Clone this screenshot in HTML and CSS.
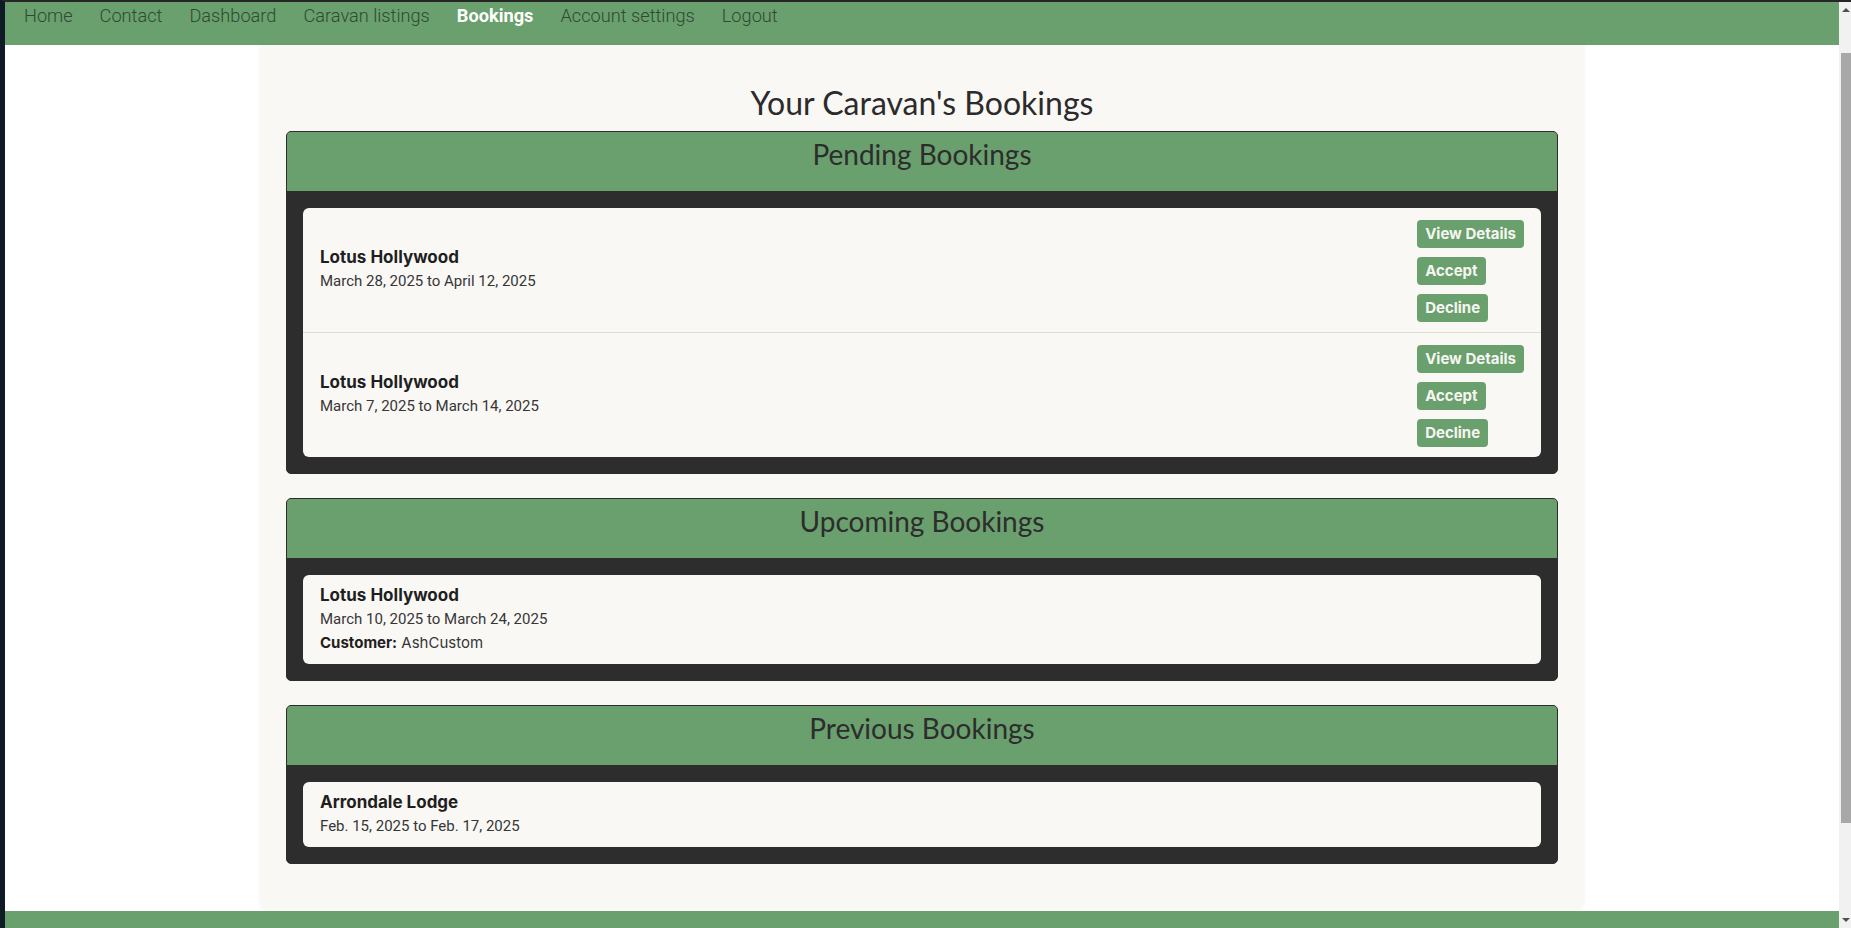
FILE: index.html
```html
<!DOCTYPE html>
<html lang="en">
<head>
<meta charset="utf-8">
<title>Your Caravan's Bookings</title>
<link rel="stylesheet" href="styles.css">
</head>
<body>
<div class="frame">
  <nav class="topnav">
    <a class="topnav-link" href="#">Home</a>
    <a class="topnav-link" href="#">Contact</a>
    <a class="topnav-link" href="#">Dashboard</a>
    <a class="topnav-link" href="#">Caravan listings</a>
    <a class="topnav-link is-active" href="#">Bookings</a>
    <a class="topnav-link" href="#">Account settings</a>
    <a class="topnav-link" href="#">Logout</a>
  </nav>

  <main class="page">
    <h1 class="page-title">Your Caravan's Bookings</h1>

    <section class="card">
      <h2 class="card-header">Pending Bookings</h2>
      <div class="card-body">
        <ul class="booking-list">
          <li class="booking booking-pending">
            <div class="booking-info">
              <p class="booking-name">Lotus Hollywood</p>
              <p class="booking-dates">March 28, 2025 to April 12, 2025</p>
            </div>
            <div class="booking-actions">
              <a class="btn" href="#">View Details</a>
              <button class="btn" type="button">Accept</button>
              <button class="btn" type="button">Decline</button>
            </div>
          </li>
          <li class="booking booking-pending">
            <div class="booking-info">
              <p class="booking-name">Lotus Hollywood</p>
              <p class="booking-dates">March 7, 2025 to March 14, 2025</p>
            </div>
            <div class="booking-actions">
              <a class="btn" href="#">View Details</a>
              <button class="btn" type="button">Accept</button>
              <button class="btn" type="button">Decline</button>
            </div>
          </li>
        </ul>
      </div>
    </section>

    <section class="card">
      <h2 class="card-header">Upcoming Bookings</h2>
      <div class="card-body">
        <ul class="booking-list">
          <li class="booking">
            <p class="booking-name">Lotus Hollywood</p>
            <p class="booking-dates">March 10, 2025 to March 24, 2025</p>
            <p class="booking-customer"><strong>Customer:</strong> AshCustom</p>
          </li>
        </ul>
      </div>
    </section>

    <section class="card">
      <h2 class="card-header">Previous Bookings</h2>
      <div class="card-body">
        <ul class="booking-list">
          <li class="booking">
            <p class="booking-name">Arrondale Lodge</p>
            <p class="booking-dates">Feb. 15, 2025 to Feb. 17, 2025</p>
          </li>
        </ul>
      </div>
    </section>
  </main>

  <footer class="footer"></footer>
</div>

<div class="scrollbar" aria-hidden="true">
  <span class="scrollbar-arrow scrollbar-arrow-up"></span>
  <span class="scrollbar-thumb"></span>
  <span class="scrollbar-arrow scrollbar-arrow-down"></span>
</div>
</body>
</html>
```

FILE: styles.css
```css
html, body {
  margin: 0;
  padding: 0;
  overflow: hidden;
}

body {
  height: 928px;
  box-sizing: border-box;
  border-top: 2px solid #262626;
  border-left: 5px solid #0f1a26;
  padding-right: 12px;
  background: #ffffff;
  font-family: "Inter", "Noto Sans", sans-serif;
  color: #2b2b2b;
}

.frame {
  height: 100%;
  display: flex;
  flex-direction: column;
}

/* ---------- top navigation ---------- */
.topnav {
  flex: 0 0 43px;
  box-sizing: border-box;
  display: flex;
  align-items: flex-start;
  gap: 27px;
  padding: 2px 0 0 19px;
  background: #6a9f6e;
}

.topnav-link {
  font-family: "Roboto", "Liberation Sans", sans-serif;
  font-weight: 300;
  font-size: 18.2px;
  line-height: 24px;
  color: #2f4a33;
  text-decoration: none;
}

.topnav-link.is-active {
  color: #ffffff;
  font-weight: 700;
}

/* ---------- page container ---------- */
.page {
  flex: 1 1 auto;
  width: 1324px;
  box-sizing: border-box;
  margin: 0 auto;
  padding: 0 26px;
  background: #f9f8f4;
  border-radius: 0 0 8px 8px;
  box-shadow: 0 0 4px rgba(0, 0, 0, 0.05);
}

.page-title {
  margin: 0 0 8px;
  padding-top: 38px;
  font-family: "Lato", sans-serif;
  font-weight: 400;
  font-size: 32px;
  line-height: 40px;
  text-align: center;
  color: #2b2b2b;
}

/* ---------- cards ---------- */
.card {
  margin-bottom: 24px;
  border: 1px solid #2d2d2d;
  border-radius: 5px;
  overflow: hidden;
  background: #2d2d2d;
}

.card-header {
  margin: 0;
  padding: 6px 0 20px;
  background: #6a9f6e;
  font-family: "Lato", sans-serif;
  font-weight: 400;
  font-size: 28px;
  line-height: 33px;
  text-align: center;
  color: #2d2d2d;
}

.card-body {
  padding: 17px 16px 16px;
}

.booking-list {
  list-style: none;
  margin: 0;
  padding: 0;
  background: #f9f8f5;
  border-radius: 6px;
  overflow: hidden;
}

.booking {
  padding: 8px 17px 9px;
  font-size: 16px;
  line-height: 24px;
}

.booking + .booking {
  border-top: 1px solid #dcdbd7;
}

.booking p {
  margin: 0;
}

.booking-name {
  font-family: "Inter", "Noto Sans", sans-serif;
  font-weight: 700;
  font-size: 17px;
  color: #1f1f1f;
}

.booking-dates {
  font-family: "Roboto", "Liberation Sans", sans-serif;
  font-weight: 400;
  font-size: 15px;
  color: #363636;
}

.booking-customer {
  font-family: "Inter", "Noto Sans", sans-serif;
  font-size: 15px;
  color: #363636;
}

.booking-customer strong {
  font-weight: 700;
  color: #1f1f1f;
}

.booking-pending {
  display: flex;
  justify-content: space-between;
  align-items: center;
  padding: 12px 17px 10px;
}

.booking-info {
  padding-bottom: 5px;
}

.booking-actions {
  display: flex;
  flex-direction: column;
  align-items: flex-start;
  gap: 9px;
}

.btn {
  display: block;
  box-sizing: border-box;
  height: 28px;
  padding: 0 8px;
  border: 0;
  border-radius: 4px;
  background: #6a9f6e;
  color: #f6f6f1;
  font-family: "Inter", "Noto Sans", sans-serif;
  font-weight: 700;
  font-size: 15px;
  line-height: 28px;
  text-decoration: none;
  cursor: pointer;
}

/* ---------- footer ---------- */
.footer {
  flex: 0 0 17px;
  margin-top: 1px;
  background: #6a9f6e;
}

/* ---------- window scrollbar ---------- */
.scrollbar {
  position: fixed;
  top: 2px;
  right: 0;
  bottom: 0;
  width: 12px;
  background: #f1f1f1;
}

.scrollbar-thumb {
  position: absolute;
  top: 51px;
  left: 2px;
  right: 0;
  height: 770px;
  background: #a8a8a8;
}

.scrollbar-arrow {
  position: absolute;
  left: 3px;
  width: 0;
  height: 0;
  border-left: 4px solid transparent;
  border-right: 4px solid transparent;
}

.scrollbar-arrow-up {
  top: 6px;
  border-bottom: 4px solid #505050;
}

.scrollbar-arrow-down {
  bottom: 6px;
  border-top: 4px solid #505050;
}
```
